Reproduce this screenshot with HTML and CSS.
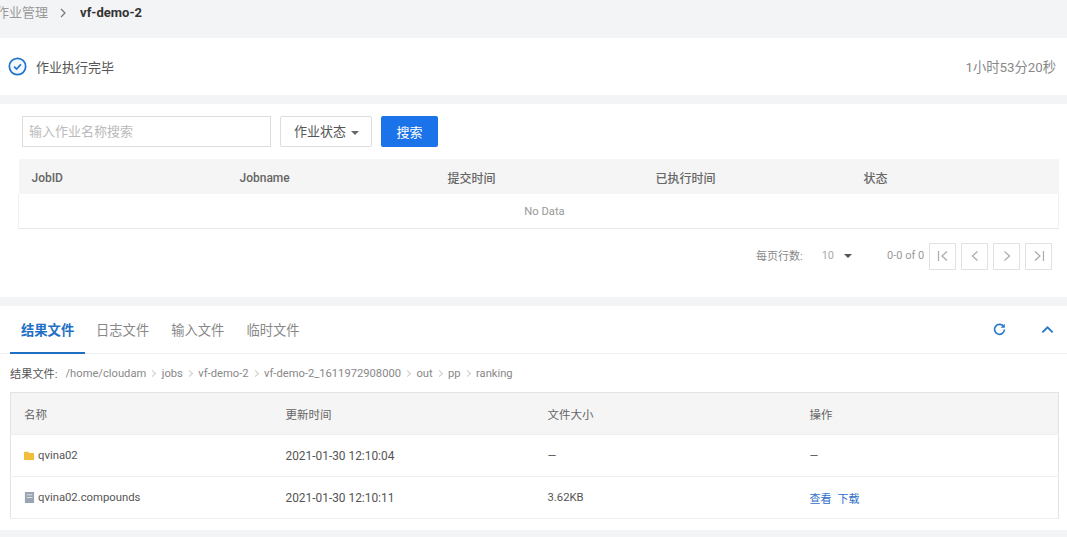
FILE: index.html
```html
<!DOCTYPE html>
<html lang="zh-CN">
<head>
<meta charset="utf-8">
<title>vf-demo-2</title>
<link rel="stylesheet" href="styles.css">
</head>
<body>
<nav class="crumb">
  <span class="crumb-parent">作业管理</span>
  <svg class="crumb-sep" viewBox="0 0 10 10"><path d="M3 1l4 4-4 4" fill="none" stroke="#777" stroke-width="1.2"/></svg>
  <strong class="crumb-current">vf-demo-2</strong>
</nav>

<section class="card status">
  <div class="status-left">
    <svg class="status-icon" viewBox="0 0 20 20"><circle cx="10" cy="10" r="8.6" fill="#f4f8fd" stroke="#1f74d0" stroke-width="1.8"/><path d="M6.4 10.2l2.6 2.5 4.6-4.9" fill="none" stroke="#1f74d0" stroke-width="1.8"/></svg>
    <span>作业执行完毕</span>
  </div>
  <span class="elapsed">1小时53分20秒</span>
</section>

<section class="card jobs">
  <div class="search-row">
    <div class="search-input">输入作业名称搜索</div>
    <div class="select">作业状态<i class="caret"></i></div>
    <button class="primary">搜索</button>
  </div>
  <table class="job-table">
    <thead><tr><th>JobID</th><th>Jobname</th><th>提交时间</th><th>已执行时间</th><th>状态</th></tr></thead>
    <tbody><tr><td colspan="5" class="empty">No Data</td></tr></tbody>
  </table>
  <div class="pager">
    <span class="per-label">每页行数:</span>
    <span class="per-value">10</span><i class="caret dark"></i>
    <span class="range">0-0 of 0</span>
    <span class="page-btn"><svg viewBox="0 0 16 16"><path d="M3.5 3v10M12 3.5L7 8l5 4.5" /></svg></span>
    <span class="page-btn"><svg viewBox="0 0 16 16"><path d="M10.5 3.5L5.5 8l5 4.5" /></svg></span>
    <span class="page-btn"><svg viewBox="0 0 16 16"><path d="M5.5 3.5l5 4.5-5 4.5" /></svg></span>
    <span class="page-btn"><svg viewBox="0 0 16 16"><path d="M12.5 3v10M4 3.5L9 8l-5 4.5" /></svg></span>
  </div>
</section>

<section class="card files">
  <div class="tabs">
    <a class="tab active">结果文件</a>
    <a class="tab">日志文件</a>
    <a class="tab">输入文件</a>
    <a class="tab">临时文件</a>
    <div class="tab-tools">
      <svg class="tool" viewBox="0 0 16 16"><path d="M12.6 5.2A5.3 5.3 0 1 0 13.3 8" fill="none" stroke="#2a78c8" stroke-width="1.7"/><path d="M13.6 1.8v4.4H9.2z" fill="#2a78c8"/></svg>
      <svg class="tool" viewBox="0 0 16 16"><path d="M2.5 11L8 5.6l5.5 5.4" fill="none" stroke="#2a78c8" stroke-width="2"/></svg>
    </div>
  </div>
  <div class="path">
    <span class="path-label">结果文件:</span>
    <span>/home/cloudam</span><i class="chev"></i>
    <span>jobs</span><i class="chev"></i>
    <span>vf-demo-2</span><i class="chev"></i>
    <span>vf-demo-2_1611972908000</span><i class="chev"></i>
    <span>out</span><i class="chev"></i>
    <span>pp</span><i class="chev"></i>
    <span>ranking</span>
  </div>
  <table class="file-table">
    <thead><tr><th>名称</th><th>更新时间</th><th>文件大小</th><th>操作</th></tr></thead>
    <tbody>
      <tr>
        <td><span class="file-name"><svg class="file-icon" viewBox="0 0 12 12"><path d="M0 2h4.5l1.2 1.3H11V11H0z" fill="#f2bd3c"/></svg>qvina02</span></td>
        <td class="date">2021-01-30 12:10:04</td><td>—</td><td>—</td>
      </tr>
      <tr>
        <td><span class="file-name"><svg class="file-icon" viewBox="0 0 12 12"><path d="M1 0h10v12H1z" fill="#9aa5b4"/><path d="M3 3h6M3 6h6" stroke="#dfe3e8" stroke-width="1"/></svg>qvina02.compounds</span></td>
        <td class="date">2021-01-30 12:10:11</td><td>3.62KB</td>
        <td><a class="link">查看</a><a class="link">下载</a></td>
      </tr>
    </tbody>
  </table>
</section>
</body>
</html>
```

FILE: styles.css
```css
* { box-sizing: border-box; }
html, body { margin: 0; padding: 0; }
body {
  width: 1067px;
  height: 537px;
  overflow: hidden;
  background: #f3f4f5;
  font-family: Roboto, "Noto Sans CJK SC", sans-serif;
  color: #555;
}
.card { background: #fff; }

.crumb { height: 38px; display: flex; align-items: flex-start; padding-top: 5px; margin-left: -4px; font-size: 13px; line-height: 16px; white-space: nowrap; }
.crumb-parent { color: #999; width: 52px; }
.crumb-sep { width: 10px; height: 10px; margin: 3px 12px 0 10px; }
.crumb-current { color: #333; font-weight: 700; }

.status { height: 57px; margin-bottom: 9px; padding: 0 11px 0 8px; display: flex; align-items: center; justify-content: space-between; font-size: 13px; color: #555; }
.status-left { display: flex; align-items: center; gap: 9px; margin-top: -1px; }
.status-icon { width: 19px; height: 19px; }
.elapsed { color: #888; font-size: 13.3px; margin-top: -1px; }

.jobs { height: 193px; margin-bottom: 9px; padding: 12px 8px 0 18px; }
.search-row { display: flex; gap: 9px; margin-left: 4px; height: 31px; }
.search-input { width: 249px; border: 1px solid #ddd; color: #bbb; font-size: 13px; line-height: 29px; padding-left: 6px; }
.select { width: 92px; border: 1px solid #ddd; border-radius: 2px; color: #555; font-size: 13px; line-height: 29px; padding-left: 13px; }
.caret { display: inline-block; margin-left: 5px; vertical-align: middle; border: 4px solid transparent; border-top-color: #666; border-bottom: 0; }
.caret.dark { margin-left: 10px; border-top-color: #555; }
.primary { width: 57px; border: 0; border-radius: 2px; background: #1a73e8; color: #fff; font: inherit; font-size: 13px; padding: 0; }

table { border-collapse: collapse; table-layout: fixed; }
.job-table { width: 1041px; margin-top: 12px; border-bottom: 1px solid #e8e8e8; }
.job-table th { height: 35px; background: #f5f5f5; color: #666; font-size: 12px; font-weight: 500; text-align: left; padding: 2px 0 0 13px; }
.empty { height: 34px; padding: 2px 0 0 12px; text-align: center; color: #999; font-size: 11.2px; border-left: 1px solid #f0f0f0; border-right: 1px solid #f0f0f0; }

.pager { display: flex; align-items: center; margin-top: 14px; height: 27px; padding-left: 738px; font-size: 11px; color: #888; white-space: nowrap; }
.pager > span:not(.page-btn) { margin-top: -2px; }
.per-value { margin-left: 19px; color: #aaa; }
.range { margin-left: 35px; margin-right: 5px; color: #999; }
.page-btn { flex: none; width: 27px; height: 27px; border: 1px solid #e2e2e2; margin-right: 5px; display: flex; align-items: center; justify-content: center; }
.page-btn svg { width: 16px; height: 16px; fill: none; stroke: #aaa; stroke-width: 1.2; }

.files { height: 224px; }
.tabs { height: 48px; display: flex; align-items: stretch; border-bottom: 1px solid #eee; padding-left: 10px; font-size: 13.3px; white-space: nowrap; }
.tab { color: #888; line-height: 50px; padding: 0 11px; }
.tab.active { color: #1f6fc4; font-weight: 700; border-bottom: 2px solid #1f6fc4; width: 75px; margin-bottom: -1px; }
.tab-tools { margin-left: auto; display: flex; align-items: center; gap: 33px; padding-right: 12px; padding-bottom: 1px; }
.tool { width: 15px; height: 15px; }

.path { height: 38px; display: flex; align-items: center; padding-left: 10px; font-size: 11.2px; color: #888; white-space: nowrap; }
.path-label { color: #555; margin-right: 8px; }
.chev { width: 5px; height: 5px; margin: 0 6.4px 0 4px; border-top: 1px solid #ccc; border-right: 1px solid #ccc; transform: rotate(45deg); }

.file-table { width: 1049px; margin-left: 10px; border: 1px solid #e3e3e3; }
.file-table th { height: 42px; background: #f5f5f5; color: #666; font-size: 11.5px; font-weight: 400; text-align: left; padding: 0 0 0 13px; border-bottom: 1px solid #eee; }
.file-table td { height: 42px; padding: 0 0 0 13px; color: #555; font-size: 11.3px; border-bottom: 1px solid #eee; }
.file-table td.date { font-size: 11.9px; }
.file-name { display: flex; align-items: center; gap: 3px; }
.file-icon { width: 11px; height: 11px; }
.link { color: #2f6fc9; margin-right: 6px; font-size: 11px; }
```
